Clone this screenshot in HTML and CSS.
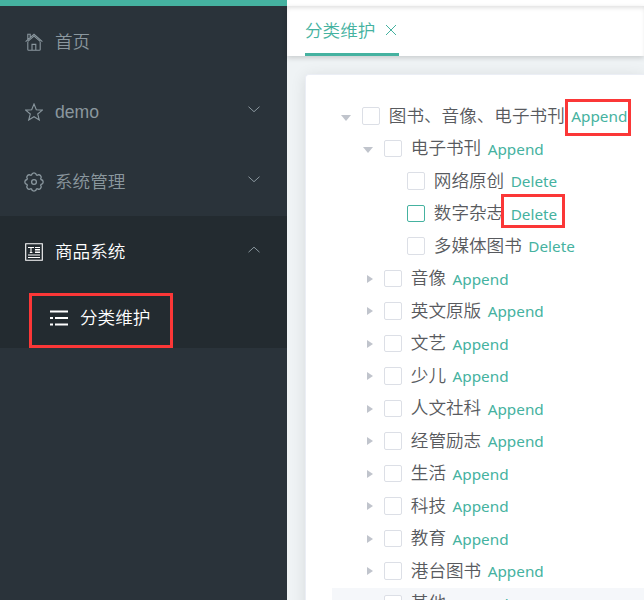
FILE: index.html
```html
<!DOCTYPE html>
<html lang="zh-CN">
<head>
<meta charset="utf-8">
<title>分类维护</title>
<link rel="stylesheet" href="styles.css">
</head>
<body>
<div class="app">
  <aside class="sidebar">
    <div class="brand"></div>
    <div class="item">
      <svg class="icon" viewBox="0 0 18 18"><path d="M.6 8.6 9 1.3l8.4 7.3M2.8 8.8v7.6q0 .9.9.9h10.6q.9 0 .9-.9V8.8M2.8 8.4 9 3.2l6.2 5.2M2.8 6.2V1.2h2.4v2.7M7 17v-5.6h3.8V17"/></svg>
      <span>首页</span>
    </div>
    <div class="item">
      <svg class="icon" viewBox="0 0 18 18"><path d="m9 1 2.3 5.7 6.1.4-4.7 3.9 1.6 6L9 13.7 3.7 17l1.6-6L.6 7.1l6.1-.4z"/></svg>
      <span>demo</span>
      <svg class="chevron" viewBox="0 0 12 7"><path d="m.5.7 5.5 5 5.5-5"/></svg>
    </div>
    <div class="item">
      <svg class="icon gear" viewBox="0 0 20 20"><path d="M7.5 3Q8 .8 10 .8T12.5 3L13.2 3.3Q15.1 2.1 16.5 3.5T16.7 6.8L17 7.5Q19.2 8 19.2 10T17 12.5L16.7 13.2Q17.9 15.1 16.5 16.5T13.2 16.7L12.5 17Q12 19.2 10 19.2T7.5 17L6.8 16.7Q4.9 17.9 3.5 16.5T3.3 13.2L3 12.5Q.8 12 .8 10T3 7.5L3.3 6.8Q2.1 4.9 3.5 3.5T6.8 3.3Z"/><circle cx="10" cy="10" r="2.4"/></svg>
      <span>系统管理</span>
      <svg class="chevron" viewBox="0 0 12 7"><path d="m.5.7 5.5 5 5.5-5"/></svg>
    </div>
    <div class="group">
      <div class="item active">
        <svg class="icon" viewBox="0 0 18 18"><path d="M.7.7h16.6v16.6H.7zM3 4.5h6M6 4.5v5M4.8 9.5h2.6M10 4.5h5M10 6.5h5M10 8h5M10 9.500h5M3 12h12M3 14.500h12"/></svg>
        <span>商品系统</span>
        <svg class="chevron" viewBox="0 0 12 7"><path d="m.5 6.2 5.5-5 5.5 5"/></svg>
      </div>
      <div class="subitem">
        <svg class="list" viewBox="0 0 18 16"><path d="M0 1.500h18M5 8h13M5 14.500h13M0 8h3M0 14.500h3"/></svg>
        <span>分类维护</span>
        <i class="mark mark-menu"></i>
      </div>
    </div>
  </aside>
  <main class="main">
    <div class="topbar"></div>
    <nav class="tabs">
      <div class="tab"><span>分类维护</span><svg class="close" viewBox="0 0 12 12"><path d="m1 1 10 10M11 1 1 11"/></svg></div>
    </nav>
    <section class="card">
      <div class="row l0 open"><i class="caret"></i><i class="box"></i><span class="name">图书、音像、电子书刊</span><a class="act marked">Append<i class="mark mark-append"></i></a></div>
      <div class="row l1 open"><i class="caret"></i><i class="box"></i><span class="name">电子书刊</span><a class="act">Append</a></div>
      <div class="row l2"><i class="box"></i><span class="name">网络原创</span><a class="act">Delete</a></div>
      <div class="row l2"><i class="box focus"></i><span class="name">数字杂志</span><a class="act marked">Delete<i class="mark mark-delete"></i></a></div>
      <div class="row l2"><i class="box"></i><span class="name">多媒体图书</span><a class="act">Delete</a></div>
      <div class="row l1"><i class="caret"></i><i class="box"></i><span class="name">音像</span><a class="act">Append</a></div>
      <div class="row l1"><i class="caret"></i><i class="box"></i><span class="name">英文原版</span><a class="act">Append</a></div>
      <div class="row l1"><i class="caret"></i><i class="box"></i><span class="name">文艺</span><a class="act">Append</a></div>
      <div class="row l1"><i class="caret"></i><i class="box"></i><span class="name">少儿</span><a class="act">Append</a></div>
      <div class="row l1"><i class="caret"></i><i class="box"></i><span class="name">人文社科</span><a class="act">Append</a></div>
      <div class="row l1"><i class="caret"></i><i class="box"></i><span class="name">经管励志</span><a class="act">Append</a></div>
      <div class="row l1"><i class="caret"></i><i class="box"></i><span class="name">生活</span><a class="act">Append</a></div>
      <div class="row l1"><i class="caret"></i><i class="box"></i><span class="name">科技</span><a class="act">Append</a></div>
      <div class="row l1"><i class="caret"></i><i class="box"></i><span class="name">教育</span><a class="act">Append</a></div>
      <div class="row l1"><i class="caret"></i><i class="box"></i><span class="name">港台图书</span><a class="act">Append</a></div>
      <div class="row l1 hover"><i class="caret"></i><i class="box"></i><span class="name">其他</span><a class="act">Append</a></div>
    </section>
  </main>
</div>
</body>
</html>
```
FILE: styles.css
```css
* { box-sizing: border-box; }
body {
  margin: 0;
  height: 600px;
  overflow: hidden;
  font: 350 17.6px/1 "Liberation Sans", "Noto Sans CJK SC", sans-serif;
}
.app { display: flex; height: 600px; overflow: hidden; }
svg { fill: none; stroke: currentColor; flex: none; }

.sidebar { width: 287px; flex: none; background: #2a333a; color: #8a979e; }
.brand { height: 6px; background: #45b2a0; }
.item { display: flex; align-items: center; height: 70px; padding: 2px 27px 0 25px; }
.item span { margin-top: 1px; }
.icon { width: 18px; height: 18px; margin-right: 12px; stroke-width: 1.1; }
.gear { width: 20px; height: 20px; margin: 0 11px 0 -1px; stroke-width: 1.3; }
.chevron { width: 12px; height: 7px; margin: -5px 0 0 auto; }
.group { height: 132px; background: #232b30; }
.active { color: #fff; }
.active .chevron { color: #8a979e; }
.subitem {
  position: relative;
  display: flex;
  align-items: center;
  height: 62px;
  padding: 2px 0 0 50px;
  color: #fff;
}
.subitem span { margin-top: 2px; }
.list { width: 18px; height: 16px; margin-right: 12px; stroke-width: 2.2; }

.mark { position: absolute; border: 3px solid #fb3737; }
.mark-menu { left: 29px; top: 7px; width: 144px; height: 55px; }

.main { flex: 1; min-width: 0; background: #eff3f5; }
.topbar { height: 6px; background: #fff; }
.tabs {
  position: relative;
  height: 50px;
  padding-left: 18px;
  background: #fff;
  box-shadow: 0 2px 5px rgba(0,0,0,.16), inset 0 3px 4px -1px rgba(0,0,0,.12);
}
.tab {
  display: flex;
  align-items: center;
  width: 94px;
  height: 50px;
  border-bottom: 3px solid #45b2a0;
  color: #45b2a0;
}
.tab span { margin-top: 4px; }
.close { width: 12px; height: 12px; margin-left: 10px; }

.card {
  height: 620px;
  margin: 18px 0 0 18px;
  padding: 25px 0 0 26px;
  border: 1px solid #ebeef5;
  border-right: 0;
  border-radius: 4px 0 0 0;
  background: #fff;
  box-shadow: 0 2px 15px rgba(0,0,0,.1);
  color: #585a5e;
}
.row { display: flex; align-items: center; height: 32.5px; }
.l0 { padding-left: 9px; }
.l1 { padding-left: 31px; }
.l2 { padding-left: 75px; }
.hover { background: #f5f7fa; }
.caret { display: flex; width: 21px; flex: none; padding-left: 4px; }
.caret::before {
  content: "";
  border: solid transparent;
  border-width: 4.5px 0 4.5px 6px;
  border-left-color: #c0c4cc;
}
.open .caret { padding: 3px 0 0 0; }
.open .caret::before {
  border-width: 6px 5px 0;
  border-color: #c0c4cc transparent transparent;
}
.box {
  flex: none;
  width: 17.5px;
  height: 17.5px;
  margin: -1px 9.3px 0 0;
  border: 1px solid #dcdfe6;
  border-radius: 2px;
  background: #fff;
}
.focus { border-color: #45b2a0; }
.name { margin-top: 1px; white-space: nowrap; }
.act {
  margin-left: 6.5px;
  font: 400 15.3px/20px "Noto Sans", sans-serif;
  color: #45b2a0;
}
.marked { position: relative; }
.mark-append { left: -6px; top: -7px; width: 66px; height: 37px; }
.mark-delete { left: -10px; top: -10px; width: 64px; height: 34px; }
```
